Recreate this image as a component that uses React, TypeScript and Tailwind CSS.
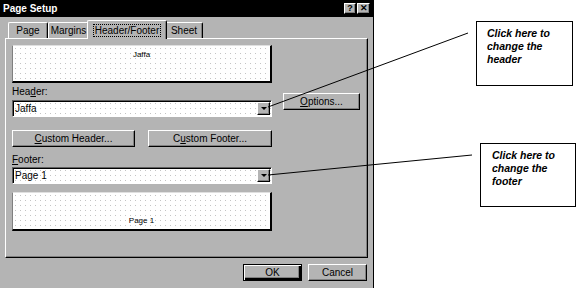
import React from "react";

const raised =
  "border border-t-white border-l-white border-r-black border-b-black shadow-[inset_-1px_-1px_#808080]";

function Btn({ w, children, def }: { w: string; children: React.ReactNode; def?: boolean }) {
  return (
    <div
      className={`${w} h-[17px] flex items-center justify-center text-[10px] text-black ${
        def
          ? "border border-black shadow-[inset_1px_1px_#fff,inset_-2px_-2px_#000,inset_-3px_-3px_#808080]"
          : raised
      }`}
    >
      {children}
    </div>
  );
}

function Combo({ value }: { value: string }) {
  return (
    <div className="w-[260px] h-[17px] bg-white border border-t-[#606060] border-l-[#606060] border-r-white border-b-white shadow-[inset_1px_1px_#000] flex items-center justify-between bg-[radial-gradient(circle,#c4c4c4_0.6px,transparent_0.8px)] bg-[length:5px_5px]">
      <span className="pl-[2px] text-[10px] leading-none text-black">{value}</span>
      <div className={`w-[13px] h-[13px] mr-[1px] bg-[#b4b4b4] ${raised} flex items-center justify-center`}>
        <div className="w-0 h-0 border-l-[3px] border-r-[3px] border-t-[3px] border-l-transparent border-r-transparent border-t-black" />
      </div>
    </div>
  );
}

function Tab({ w, label, selected }: { w: string; label: string; selected?: boolean }) {
  return (
    <div
      className={`${w} ${
        selected ? "h-[19px] mb-[-1px] z-10 -mx-[2px] bg-[#b4b4b4]" : "h-[16px]"
      } flex items-center justify-center border-t border-l border-t-white border-l-white border-r border-r-black rounded-t-[2px] shadow-[inset_-1px_0_#808080] text-[10px] text-black`}
    >
      {selected ? (
        <span className="border border-dotted border-black px-[1px] leading-[11px]">{label}</span>
      ) : (
        label
      )}
    </div>
  );
}

export default function App() {
  return (
    <div className="relative w-[579px] h-[288px] bg-white overflow-hidden font-['Liberation_Sans',Arial,sans-serif]">
      <div className="w-[374px] h-[288px] bg-[#b4b4b4] border-r border-r-black flex flex-col">
        {/* title bar */}
        <div className="h-[17px] bg-black flex items-center justify-between pl-[3px] pr-[3px]">
          <span className="text-white text-[10px] font-bold leading-none">Page Setup</span>
          <div className="flex gap-[1px]">
            <div className={`w-[12px] h-[11px] bg-[#b4b4b4] ${raised} flex items-center justify-center text-[9px] font-bold leading-none text-black`}>?</div>
            <div className={`w-[13px] h-[11px] bg-[#b4b4b4] ${raised} flex items-center justify-center text-[9px] font-bold leading-none text-black`}>✕</div>
          </div>
        </div>
        {/* body */}
        <div className="flex flex-col pl-[5px] pr-[5px] pt-[3px]">
          <div className="flex items-end pl-[3px] h-[18px]">
            <Tab w="w-[40px]" label="Page" />
            <Tab w="w-[41px]" label="Margins" />
            <Tab w="w-[80px]" label="Header/Footer" selected />
            <Tab w="w-[38px]" label="Sheet" />
          </div>
          {/* panel */}
          <div className="h-[220px] w-[363px] border-t border-l border-t-white border-l-white border-r border-b border-r-black border-b-black shadow-[inset_-1px_-1px_#808080] pl-[6px] pt-[6px] flex flex-col">
            <div className="w-[260px] h-[38px] bg-white border-l border-t border-l-[#808080] border-t-[#e0e0e0] border-r-2 border-b-2 border-r-black border-b-black flex justify-center pt-[5px] bg-[radial-gradient(circle,#c4c4c4_0.6px,transparent_0.8px)] bg-[length:5px_5px]">
              <span className="text-[8px] leading-none text-black">Jaffa</span>
            </div>
            <div className="flex items-start mt-[2px]">
              <div className="flex flex-col">
                <div className="h-[13px] leading-[13px] text-[10px] text-black">
                  Hea<span className="underline">d</span>er:
                </div>
                <div className="mt-[2px]">
                  <Combo value="Jaffa" />
                </div>
              </div>
              <div className="ml-[11px] mt-[8px]">
                <Btn w="w-[77px]">
                  <span className="underline">O</span>ptions...
                </Btn>
              </div>
            </div>
            <div className="flex gap-[13px] mt-[13px]">
              <Btn w="w-[123px]">
                <span className="underline">C</span>ustom Header...
              </Btn>
              <Btn w="w-[124px]">
                C<span className="underline">u</span>stom Footer...
              </Btn>
            </div>
            <div className="mt-[7px] h-[12px] leading-[12px] text-[10px] text-black">
              <span className="underline">F</span>ooter:
            </div>
            <div className="mt-[1px]">
              <Combo value="Page 1" />
            </div>
            <div className="mt-[8px] w-[260px] h-[39px] bg-white border-l border-t border-l-[#808080] border-t-[#e0e0e0] border-r-2 border-b-2 border-r-black border-b-black flex items-end justify-center pb-[4px] bg-[radial-gradient(circle,#c4c4c4_0.6px,transparent_0.8px)] bg-[length:5px_5px]">
              <span className="text-[8px] leading-none text-black">Page 1</span>
            </div>
          </div>
          <div className="flex justify-end gap-[6px] mt-[6px] pr-[1px]">
            <Btn w="w-[59px]" def>
              OK
            </Btn>
            <Btn w="w-[59px]">Cancel</Btn>
          </div>
        </div>
      </div>

      {/* callout lines */}
      <svg className="absolute inset-0 pointer-events-none" width="579" height="288" viewBox="0 0 579 288">
        <line x1="268" y1="107" x2="468" y2="33" stroke="black" strokeWidth="1" />
        <line x1="268" y1="175" x2="472" y2="155" stroke="black" strokeWidth="1" />
      </svg>

      {/* callouts */}
      <div className="absolute left-[476px] top-[21px] w-[97px] h-[65px] border border-black bg-white pl-[10px] pt-[5px]">
        <p className="text-[10.5px] leading-[13px] font-bold italic text-black">
          Click here to
          <br />
          change the
          <br />
          header
        </p>
      </div>
      <div className="absolute left-[480px] top-[143px] w-[96px] h-[64px] border border-black bg-white pl-[11px] pt-[5px]">
        <p className="text-[10.5px] leading-[13px] font-bold italic text-black">
          Click here to
          <br />
          change the
          <br />
          footer
        </p>
      </div>
    </div>
  );
}
